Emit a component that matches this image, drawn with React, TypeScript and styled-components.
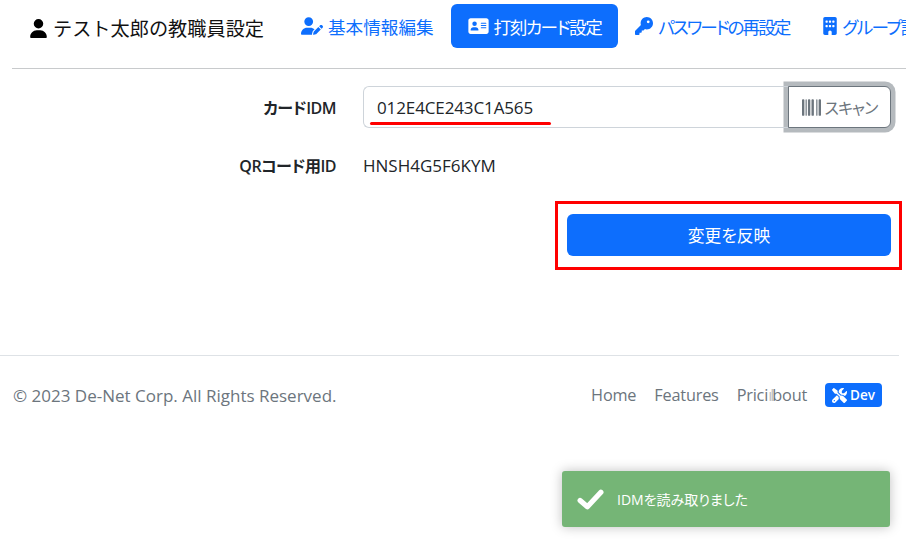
import React from 'react';
import styled, { createGlobalStyle } from 'styled-components';
import {
  FaUser,
  FaUserPen,
  FaAddressCard,
  FaKey,
  FaBuilding,
  FaBarcode,
  FaScrewdriverWrench,
} from 'react-icons/fa6';

const navItems = [
  { label: '基本情報編集', icon: <FaUserPen />, iconWidth: 22, tracking: 0, active: false },
  { label: '打刻カード設定', icon: <FaAddressCard />, iconWidth: 21, tracking: -1.45, active: true },
  { label: 'パスワードの再設定', icon: <FaKey />, iconWidth: 18, tracking: -2, active: false },
  { label: 'グループ設定', icon: <FaBuilding />, iconWidth: 14, tracking: -1.6, active: false },
];

const App: React.FC = () => {
  return (
    <Page>
      <GlobalStyle />
      <Header>
        <Title>
          <FaUser />
          <span>テスト太郎の教職員設定</span>
        </Title>
        <Nav>
          {navItems.map((item) => (
            <NavItem
              key={item.label}
              $active={item.active}
              $iconWidth={item.iconWidth}
              $tracking={item.tracking}
            >
              {item.icon}
              <span>{item.label}</span>
            </NavItem>
          ))}
        </Nav>
      </Header>
      <Form>
        <FormRow>
          <FormLabel>カードIDM</FormLabel>
          <InputGroup>
            <CardInput>
              012E4CE243C1A565
              <RedUnderline />
            </CardInput>
            <ScanButton>
              <FaBarcode />
              <span>スキャン</span>
            </ScanButton>
          </InputGroup>
        </FormRow>
        <QrRow>
          <FormLabel>QRコード用ID</FormLabel>
          <QrValue>HNSH4G5F6KYM</QrValue>
        </QrRow>
        <SubmitRow>
          <SubmitButton>
            変更を反映
            <RedBox />
          </SubmitButton>
        </SubmitRow>
      </Form>
      <Footer>
        <Copyright>© 2023 De-Net Corp. All Rights Reserved.</Copyright>
        <FooterNav>
          <FooterLink>Home</FooterLink>
          <FooterLink>Features</FooterLink>
          <FooterLink>
            Prici<Overlapped>ıl</Overlapped>bout
          </FooterLink>
          <DevBadge>
            <FaScrewdriverWrench />
            Dev
          </DevBadge>
        </FooterNav>
      </Footer>
      <Toast>
        <CheckMark viewBox="0 0 26 20">
          <path d="M3 11l7 6L23 3" />
        </CheckMark>
        <span>IDMを読み取りました</span>
      </Toast>
    </Page>
  );
};

export default App;

const GlobalStyle = createGlobalStyle`
  html, body {
    margin: 0;
    height: 100%;
    overflow: hidden;
    background: #fff;
  }
`;

const Page = styled.div`
  position: relative;
  width: 906px;
  height: 543px;
  overflow: hidden;
  font-family: 'Open Sans', 'Noto Sans CJK JP', sans-serif;
  font-feature-settings: 'palt';
  font-size: 17px;
  color: #212529;
`;

const Header = styled.header`
  display: flex;
  align-items: flex-start;
  height: 69px;
  margin-left: 12px;
  padding: 4px 0 0 17px;
  box-sizing: border-box;
  border-bottom: 1px solid #c8cacc;
  white-space: nowrap;
`;

const Title = styled.div`
  display: flex;
  align-items: center;
  gap: 5px;
  height: 48px;
  width: 255px;
  flex: none;
  font-size: 19.2px;
  font-feature-settings: normal;
  color: #111;

  svg {
    width: 19px;
    height: 19px;
    color: #000;
  }
`;

const Nav = styled.nav`
  display: flex;
  flex: none;
`;

const NavItem = styled.a<{ $active: boolean; $iconWidth: number; $tracking: number }>`
  display: flex;
  align-items: center;
  gap: 5px;
  height: 44px;
  padding: 0 17px;
  border-radius: 6px;
  font-size: 17.6px;
  letter-spacing: ${({ $tracking }) => $tracking}px;
  color: ${({ $active }) => ($active ? '#fff' : '#0d6efd')};
  background: ${({ $active }) => ($active ? '#0d6efd' : 'transparent')};

  svg {
    flex: none;
    width: ${({ $iconWidth }) => $iconWidth}px;
    height: 18px;
  }
`;

const Form = styled.main`
  padding: 17px 15px 0 0;
  height: 286px;
  box-sizing: border-box;
`;

const FormRow = styled.div`
  display: flex;
  align-items: center;
  height: 42px;
`;

const QrRow = styled(FormRow)`
  margin-top: 16px;
`;

const FormLabel = styled.label`
  width: 336px;
  flex: none;
  text-align: right;
  font-weight: 600;
  font-size: 16px;
  letter-spacing: -0.5px;
`;

const InputGroup = styled.div`
  display: flex;
  flex: 1;
  margin-left: 27px;
  height: 42px;
`;

const CardInput = styled.div`
  position: relative;
  flex: 1;
  display: flex;
  align-items: center;
  padding-left: 13px;
  border: 1px solid #ced4da;
  border-right: none;
  border-radius: 6px 0 0 6px;
  letter-spacing: -0.12px;
`;

const RedUnderline = styled.i`
  position: absolute;
  left: 6px;
  bottom: 2px;
  width: 181px;
  height: 3px;
  border-radius: 2px;
  background: #f00;
`;

const ScanButton = styled.button`
  display: flex;
  align-items: center;
  justify-content: center;
  gap: 4px;
  width: 103px;
  height: 42px;
  padding: 0;
  background: #fff;
  border: 1px solid #6c757d;
  border-radius: 0 6px 6px 0;
  box-shadow: 0 0 0 4.5px rgba(108, 117, 125, 0.5);
  color: #6c757d;
  font-family: inherit;
  font-feature-settings: inherit;
  font-size: 16px;
  letter-spacing: -1px;

  svg {
    width: 19px;
    height: 19px;
  }
`;

const QrValue = styled.div`
  margin-left: 27px;
`;

const SubmitRow = styled.div`
  display: flex;
  justify-content: flex-end;
  margin-top: 28px;
`;

const SubmitButton = styled.button`
  position: relative;
  width: 324px;
  height: 42px;
  background: #0d6efd;
  border: none;
  border-radius: 6px;
  color: #fff;
  font-family: inherit;
  font-feature-settings: inherit;
  font-size: 16.8px;
`;

const RedBox = styled.i`
  position: absolute;
  left: -12px;
  top: -13px;
  width: 347px;
  height: 69px;
  box-sizing: border-box;
  border: 3px solid #f00;
`;

const Footer = styled.footer`
  display: flex;
  justify-content: space-between;
  align-items: center;
  width: 899px;
  height: 81px;
  padding: 0 17px 2px 13px;
  box-sizing: border-box;
  border-top: 1px solid #dee2e6;
  color: #6c757d;
`;

const Copyright = styled.div``;

const FooterNav = styled.div`
  display: flex;
  align-items: center;
  gap: 18px;
`;

const FooterLink = styled.a`
  color: #6c757d;
  font-size: 16.3px;
  letter-spacing: -0.2px;
`;

const Overlapped = styled.span`
  opacity: 0.45;
  letter-spacing: -2px;
`;

const DevBadge = styled.span`
  display: flex;
  align-items: center;
  gap: 3px;
  height: 24px;
  padding: 0 7px;
  border-radius: 4px;
  background: #0d6efd;
  color: #fff;
  font-size: 13.5px;
  font-weight: 600;

  svg {
    width: 15px;
    height: 15px;
  }
`;

const Toast = styled.div`
  position: absolute;
  left: 562px;
  top: 471px;
  display: flex;
  align-items: center;
  gap: 13px;
  width: 328px;
  height: 56px;
  padding-left: 15px;
  box-sizing: border-box;
  background: #75b576;
  border-radius: 3px;
  box-shadow: 0 0 12px rgba(0, 0, 0, 0.25);
  color: #fff;
  font-size: 14px;
`;

const CheckMark = styled.svg`
  width: 27px;
  height: 21px;
  fill: none;
  stroke: #fff;
  stroke-width: 5;
  stroke-linecap: round;
  stroke-linejoin: round;
`;
